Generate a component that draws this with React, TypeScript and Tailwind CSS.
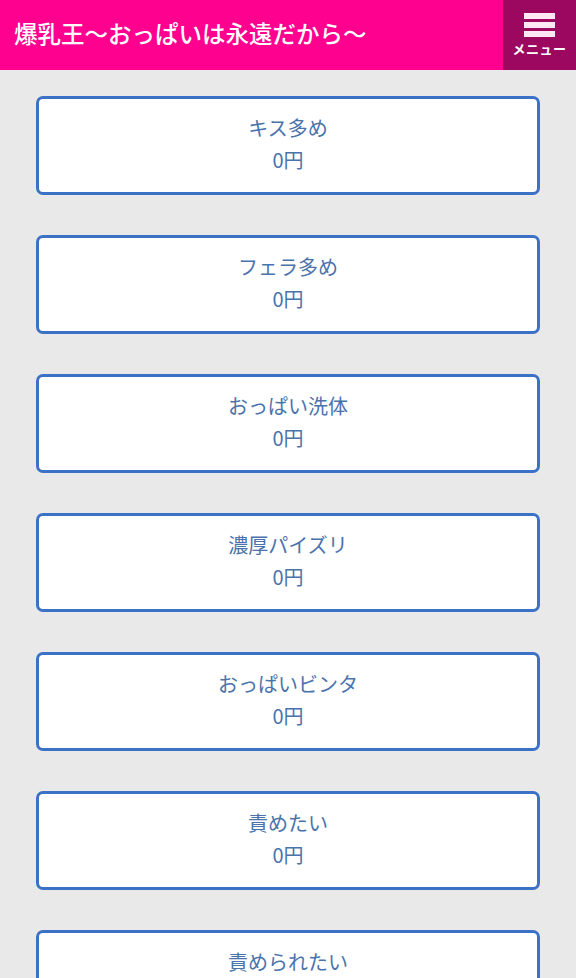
import React from "react";

const items = [
  "キス多め",
  "フェラ多め",
  "おっぱい洗体",
  "濃厚パイズリ",
  "おっぱいビンタ",
  "責めたい",
  "責められたい",
];

export default function App() {
  return (
    <div
      className="min-h-screen bg-[#e9e9e9]"
      style={{ fontFamily: '"Noto Sans CJK JP", "Noto Sans", sans-serif' }}
    >
      <header className="flex h-[70px] bg-[#ff008f]">
        <h1 className="flex flex-1 items-center pb-[2px] pl-[14px] text-[23.5px] font-medium text-white">
          爆乳王〜おっぱいは永遠だから〜
        </h1>
        <button className="flex w-[73px] flex-col items-center bg-[#9c0760] pt-[13px]">
          <span className="flex w-[31px] flex-col gap-[3px]">
            <span className="h-[6px] bg-[#ffe8f3]" />
            <span className="h-[6px] bg-[#ffe8f3]" />
            <span className="h-[6px] bg-[#ffe8f3]" />
          </span>
          <span className="mt-[3px] text-[13px] font-bold leading-[18px] tracking-[0.5px] text-white">
            メニュー
          </span>
        </button>
      </header>
      <main className="flex flex-col gap-[40px] px-[36px] pt-[26px] pb-[40px]">
        {items.map((name) => (
          <div
            key={name}
            className="flex h-[99px] flex-col items-center justify-center rounded-[7px] border-[3px] border-[#3c72c6] bg-white pb-[4px] text-[20px] leading-[32px] text-[#4a73ab]"
          >
            <div>{name}</div>
            <div>0円</div>
          </div>
        ))}
      </main>
    </div>
  );
}
